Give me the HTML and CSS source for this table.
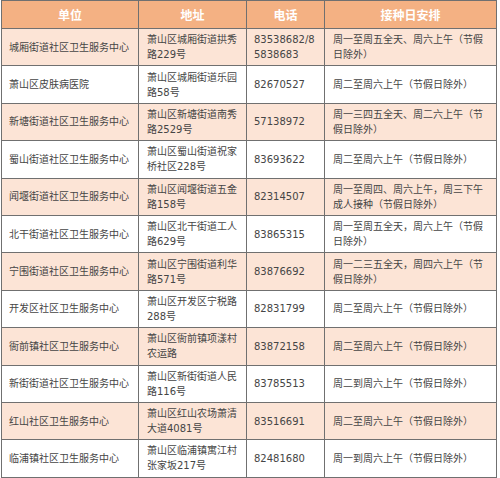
FILE: index.html
```html
<!DOCTYPE html>
<html lang="zh-CN">
<head>
<meta charset="utf-8">
<title>接种点</title>
<link rel="stylesheet" href="styles.css">
</head>
<body>
<table class="sched">
  <colgroup>
    <col class="c1"><col class="c2"><col class="c3"><col class="c4">
  </colgroup>
  <thead>
    <tr><th>单位</th><th>地址</th><th>电话</th><th>接种日安排</th></tr>
  </thead>
  <tbody>
    <tr class="alt"><td>城厢街道社区卫生服务中心</td><td>萧山区城厢街道拱秀<br>路229号</td><td>83538682/8<br>5838683</td><td>周一至周五全天、周六上午（节假<br>日除外）</td></tr>
    <tr><td>萧山区皮肤病医院</td><td>萧山区城厢街道乐园<br>路58号</td><td>82670527</td><td>周二至周六上午（节假日除外）</td></tr>
    <tr class="alt"><td>新塘街道社区卫生服务中心</td><td>萧山区新塘街道南秀<br>路2529号</td><td>57138972</td><td>周一三四五全天、周二六上午（节<br>假日除外）</td></tr>
    <tr><td>蜀山街道社区卫生服务中心</td><td>萧山区蜀山街道祝家<br>桥社区228号</td><td>83693622</td><td>周二至周六上午（节假日除外）</td></tr>
    <tr class="alt"><td>闻堰街道社区卫生服务中心</td><td>萧山区闻堰街道五金<br>路158号</td><td>82314507</td><td>周一至周四、周六上午，周三下午<br>成人接种（节假日除外）</td></tr>
    <tr><td>北干街道社区卫生服务中心</td><td>萧山区北干街道工人<br>路629号</td><td>83865315</td><td>周一至周五全天，周六上午（节假<br>日除外）</td></tr>
    <tr class="alt"><td>宁围街道社区卫生服务中心</td><td>萧山区宁围街道利华<br>路571号</td><td>83876692</td><td>周一二三五全天，周四六上午（节<br>假日除外）</td></tr>
    <tr><td>开发区社区卫生服务中心</td><td>萧山区开发区宁税路<br>288号</td><td>82831799</td><td>周二至周六上午（节假日除外）</td></tr>
    <tr class="alt"><td>衙前镇社区卫生服务中心</td><td>萧山区衙前镇项漾村<br>农运路</td><td>83872158</td><td>周二至周六上午（节假日除外）</td></tr>
    <tr><td>新街街道社区卫生服务中心</td><td>萧山区新街街道人民<br>路116号</td><td>83785513</td><td>周二到周六上午（节假日除外）</td></tr>
    <tr class="alt"><td>红山社区卫生服务中心</td><td>萧山区红山农场萧清<br>大道4081号</td><td>83516691</td><td>周二至周六上午（节假日除外）</td></tr>
    <tr><td>临浦镇社区卫生服务中心</td><td>萧山区临浦镇寓江村<br>张家坂217号</td><td>82481680</td><td>周一到周六上午（节假日除外）</td></tr>
  </tbody>
</table>
</body>
</html>
```
FILE: styles.css
```css
html, body {
  margin: 0;
  padding: 0;
  background: #ffffff;
}
body {
  padding: 0 0 0 1px;
  font-family: "DejaVu Sans", "Noto Sans CJK SC", sans-serif;
  color: #454545;
}
.sched {
  border-collapse: collapse;
  table-layout: fixed;
  width: 495px;
}
.c1 { width: 137px; }
.c2 { width: 108px; }
.c3 { width: 78px; }
.c4 { width: 172px; }
.sched th,
.sched td {
  border: 1px solid #707070;
  white-space: nowrap;
  overflow: hidden;
}
.sched th {
  height: 27px;
  padding: 0;
  background: #f4b183;
  color: #ffffff;
  font-family: "Noto Sans CJK SC", sans-serif;
  font-size: 12px;
  font-weight: bold;
  text-align: center;
}
.sched td {
  height: 36.4px;
  padding: 0 6px 0 7px;
  font-size: 10px;
  line-height: 15px;
  text-align: left;
  vertical-align: middle;
}
.sched td:nth-child(2) { padding-left: 8px; }
.sched td:nth-child(4) { padding-left: 8px; }
.sched tr.alt td {
  background: #fce4d6;
}
```
